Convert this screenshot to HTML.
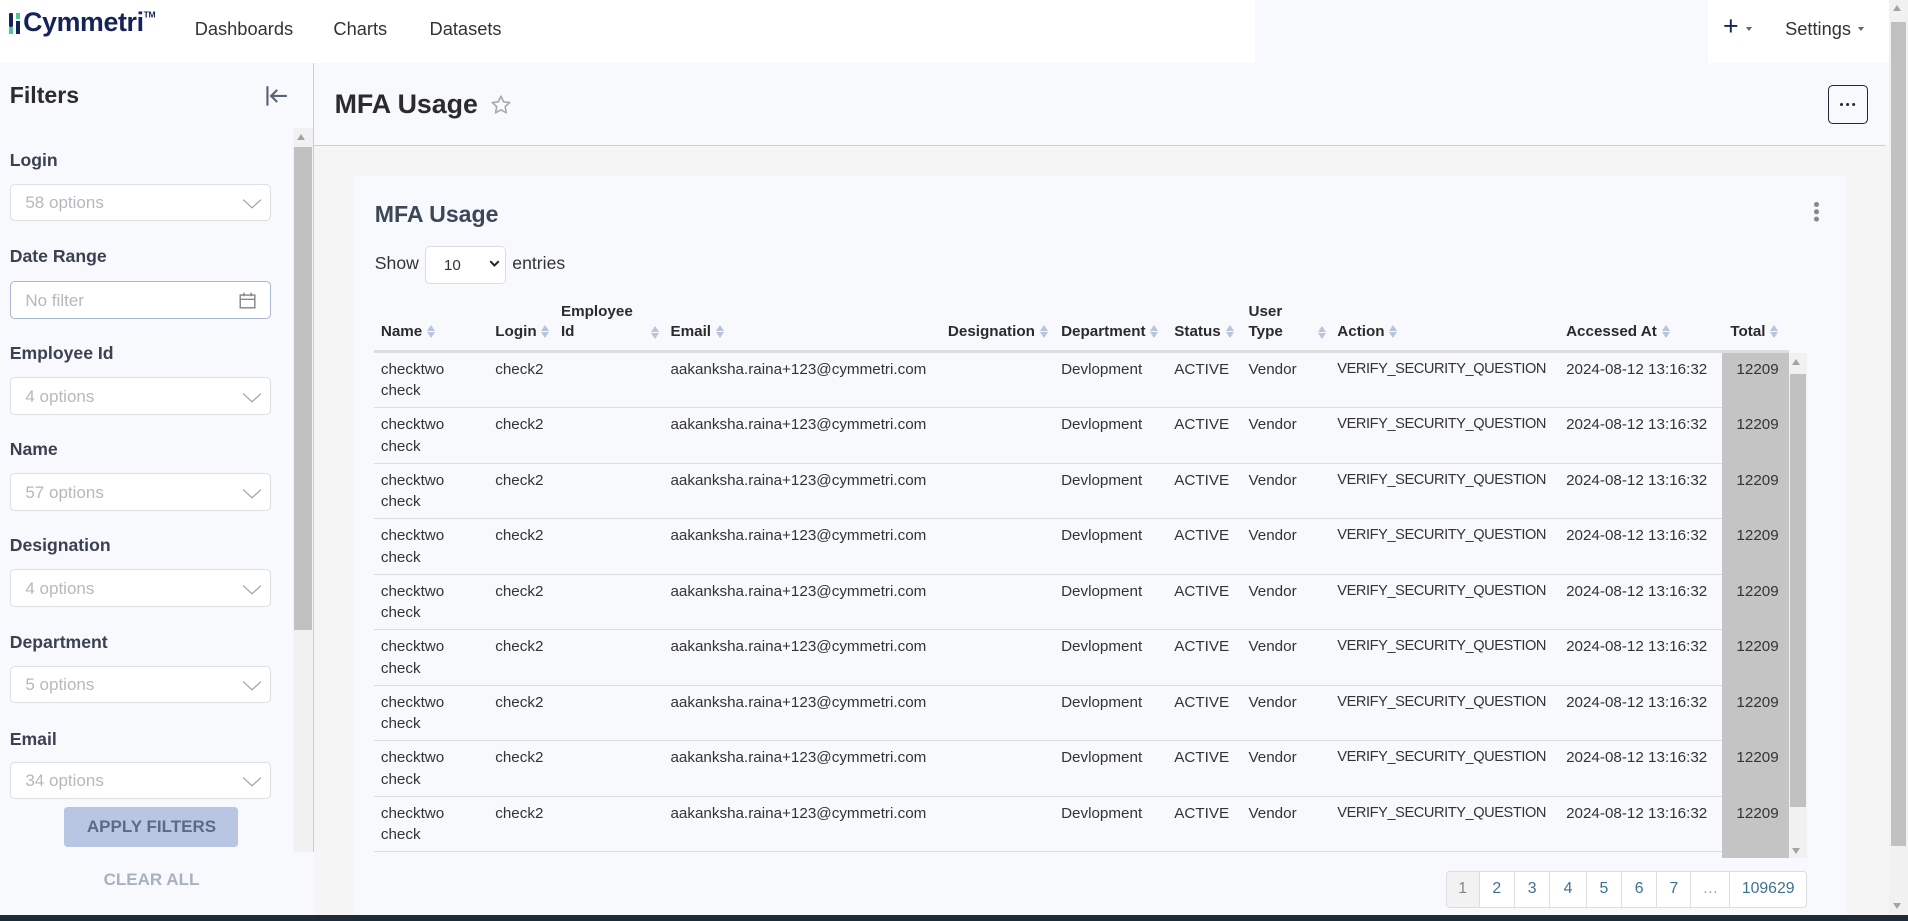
<!DOCTYPE html>
<html><head><meta charset="utf-8"><style>
html{zoom:1.21684}
*{box-sizing:border-box;margin:0;padding:0}
body{width:1568px;height:757px;overflow:hidden;position:relative;background:#f7f9fc;font-family:"Liberation Sans",sans-serif;color:#333}
.a{position:absolute}
.nav a{position:absolute;top:15px;font-size:15px;color:#333}
.lbl{position:absolute;left:8px;font-size:14.5px;font-weight:bold;color:#3a4150}
.sel{position:absolute;left:8px;width:215px;height:31px;background:#fff;border:1px solid #dcdfe4;border-radius:4px;font-size:14px;color:#b5b8be;padding:7px 12px}
.sel .chev{position:absolute;right:10px;top:8px;width:10px;height:10px;border-right:1.3px solid #999;border-bottom:1.3px solid #999;transform:scaleX(1.1) rotate(45deg);}
.th{position:absolute;font-size:12.5px;font-weight:bold;color:#2b2b2b;line-height:17px}
.s{display:inline-block;width:7px;height:12px;vertical-align:middle;margin-left:4px;position:relative}
.s:before{content:"";position:absolute;left:0;top:0;border:3.5px solid transparent;border-bottom:5px solid #b8c4dc;border-top:0}
.s:after{content:"";position:absolute;left:0;top:6px;border:3.5px solid transparent;border-top:5px solid #b8c4dc;border-bottom:0}
.row{position:absolute;left:307px;width:1108px;height:45.6px;border-bottom:1px solid #ddd;font-size:12.5px;color:#333;line-height:17.5px}
.row span{position:absolute;top:5px}
.row span.ac{font-size:12px;letter-spacing:-0.35px}
.pg{position:absolute;top:716px;height:30px;border:1px solid #ddd;border-left:none;font-size:13px;color:#3d7190;text-align:center;line-height:28px;background:#fff}
</style></head><body>
<!-- nav -->
<div class="a" style="left:0;top:0;width:1031px;height:52px;background:#fff"></div>
<div class="a" style="left:1404px;top:0;width:148px;height:52px;background:#fff"></div>
<div class="a" style="left:7px;top:11px;width:4px;height:11px;background:#14245a;border-radius:1px"></div>
<div class="a" style="left:7px;top:22px;width:4px;height:6px;background:#4cc9a0"></div>
<div class="a" style="left:13px;top:11px;width:3.5px;height:5px;background:#4cc9a0"></div>
<div class="a" style="left:13px;top:17px;width:3.5px;height:11px;background:#14245a"></div>
<div class="a" style="left:19px;top:6px;font-size:22px;font-weight:bold;color:#14245a;letter-spacing:-0.3px">Cymmetri<sup style="font-size:7px;vertical-align:11px">TM</sup></div>
<div class="nav"><a style="left:160px">Dashboards</a><a style="left:274px">Charts</a><a style="left:353px">Datasets</a></div>
<div class="a" style="left:1416px;top:9px;font-size:22px;color:#14245a">+</div>
<div class="a" style="left:1435px;top:22px;border:3px solid transparent;border-top:4px solid #666"></div>
<div class="a" style="left:1467px;top:15px;font-size:15px;color:#333">Settings</div>
<div class="a" style="left:1527px;top:22px;border:3px solid transparent;border-top:4px solid #666"></div>
<!-- page scrollbar -->
<div class="a" style="left:1552px;top:0;width:16px;height:752px;background:#f1f1f1"></div>
<div class="a" style="left:1554px;top:18px;width:12px;height:677px;background:#c1c1c1"></div>
<div class="a" style="left:1556px;top:4px;border:4px solid transparent;border-bottom:5px solid #a3a3a3;border-top:0"></div>
<div class="a" style="left:1556px;top:742px;border:4px solid transparent;border-top:5px solid #a3a3a3;border-bottom:0"></div>
<div class="a" style="left:0;top:752px;width:1568px;height:5px;background:#1e2b36"></div>
<!-- sidebar -->
<div class="a" style="left:257px;top:52px;width:1px;height:648px;background:#c6cfe0"></div>
<div class="a" style="left:8px;top:67px;font-size:19px;font-weight:bold;color:#2b2b2b">Filters</div>
<svg class="a" style="left:218px;top:70px" width="20" height="18" viewBox="0 0 20 18"><path d="M2 1v16M18 9H5M10 4L5 9l5 5" stroke="#5a6577" stroke-width="1.8" fill="none"/></svg>
<div class="a" style="left:241px;top:105px;width:16px;height:595px;background:#f1f1f1"></div>
<div class="a" style="left:242px;top:121px;width:14px;height:397px;background:#c1c1c1"></div>
<div class="a" style="left:244px;top:110px;border:4px solid transparent;border-bottom:5px solid #a3a3a3;border-top:0"></div>
<div class="lbl" style="top:123px">Login</div>
<div class="sel" style="top:151px">58 options<i class="chev"></i></div>
<div class="lbl" style="top:202px">Date Range</div>
<div class="sel" style="top:231px;border-color:#a9b6d6">No filter
<svg class="a" style="right:12px;top:8px" width="14" height="14" viewBox="0 0 14 14"><rect x="1" y="2.5" width="12" height="10.5" fill="none" stroke="#888" stroke-width="1.2"/><path d="M1 6h12M4 0.5v3M10 0.5v3" stroke="#888" stroke-width="1.2"/></svg></div>
<div class="lbl" style="top:282px">Employee Id</div>
<div class="sel" style="top:310px">4 options<i class="chev"></i></div>
<div class="lbl" style="top:361px">Name</div>
<div class="sel" style="top:389px">57 options<i class="chev"></i></div>
<div class="lbl" style="top:440px">Designation</div>
<div class="sel" style="top:468px">4 options<i class="chev"></i></div>
<div class="lbl" style="top:519px">Department</div>
<div class="sel" style="top:547px">5 options<i class="chev"></i></div>
<div class="lbl" style="top:599px">Email</div>
<div class="sel" style="top:626px">34 options<i class="chev"></i></div>
<div class="a" style="left:53px;top:663px;width:143px;height:33px;background:#b8c6e4;border-radius:3px;color:#5b6b84;font-size:14px;font-weight:bold;text-align:center;line-height:33px">APPLY FILTERS</div>
<div class="a" style="left:53px;top:715px;width:143px;text-align:center;color:#a8b1c2;font-size:14px;font-weight:bold">CLEAR ALL</div>
<!-- main header -->
<div class="a" style="left:275px;top:73px;font-size:22px;font-weight:bold;color:#2b2b2b">MFA Usage</div>
<svg class="a" style="left:403px;top:77px" width="18" height="18" viewBox="0 0 24 24"><path d="M12 2.5l2.9 6.1 6.6.8-4.9 4.6 1.3 6.6L12 17.3l-5.9 3.3 1.3-6.6-4.9-4.6 6.6-.8z" fill="none" stroke="#aaa" stroke-width="1.8" stroke-linejoin="round"/></svg>
<div class="a" style="left:1502px;top:70px;width:33px;height:32px;border:1.3px solid #1d2740;border-radius:4px"></div>
<div class="a" style="left:1512px;top:85px;width:2.5px;height:2.5px;border-radius:2px;background:#1d2740;box-shadow:5px 0 0 #1d2740,10px 0 0 #1d2740"></div>
<div class="a" style="left:258px;top:119px;width:1292px;height:1px;background:#c6cfe0"></div>
<div class="a" style="left:258px;top:120px;width:1294px;height:632px;background:#f5f5f6"></div>
<!-- card -->
<div class="a" style="left:291px;top:145px;width:1227px;height:607px;background:#f7f9fc"></div>
<div class="a" style="left:308px;top:165px;font-size:19px;font-weight:bold;color:#3c4859">MFA Usage</div>
<div class="a" style="left:1491px;top:166px;width:4px;height:4px;border-radius:2px;background:#888;box-shadow:0 6px 0 #888,0 12px 0 #888"></div>
<div class="a" style="left:308px;top:208px;font-size:14.5px">Show</div>
<div class="a" style="left:349px;top:202px;width:67px;height:31px;background:#fff;border:1px solid #ddd;border-radius:4px;font-size:12.5px;padding:8px 15px">10</div>
<svg class="a" style="left:402px;top:214px" width="9" height="6" viewBox="0 0 9 6"><path d="M1 1l3.5 3.5L8 1" stroke="#222" stroke-width="1.6" fill="none"/></svg>
<div class="a" style="left:421px;top:208px;font-size:14.5px">entries</div>
<!-- table header -->
<div class="th" style="left:313px;top:265px">Name<i class="s"></i></div>
<div class="th" style="left:407px;top:265px">Login<i class="s"></i></div>
<div class="th" style="left:461px;top:248px">Employee<br>Id</div><i class="s" style="position:absolute;left:531px;top:268px"></i>
<div class="th" style="left:551px;top:265px">Email<i class="s"></i></div>
<div class="th" style="left:779px;top:265px">Designation<i class="s"></i></div>
<div class="th" style="left:872px;top:265px">Department<i class="s"></i></div>
<div class="th" style="left:965px;top:265px">Status<i class="s"></i></div>
<div class="th" style="left:1026px;top:248px">User<br>Type</div><i class="s" style="position:absolute;left:1079px;top:268px"></i>
<div class="th" style="left:1099px;top:265px">Action<i class="s"></i></div>
<div class="th" style="left:1287px;top:265px">Accessed At<i class="s"></i></div>
<div class="th" style="left:1422px;top:265px">Total<i class="s"></i></div>
<div class="a" style="left:307px;top:288px;width:1108px;height:2px;background:#ddd"></div>
<div class="a" style="left:1415px;top:290px;width:55px;height:415px;background:#c4c4c4"></div>
<div class="a" style="left:1415px;top:288px;width:55px;height:2px;background:#ddd"></div>
<div class="a" style="left:1470px;top:290px;width:15px;height:415px;background:#f1f1f1"></div>
<div class="a" style="left:1471px;top:307px;width:13px;height:356px;background:#c1c1c1"></div>
<div class="a" style="left:1473px;top:295px;border:4px solid transparent;border-bottom:5px solid #a3a3a3;border-top:0"></div>
<div class="a" style="left:1473px;top:697px;border:4px solid transparent;border-top:5px solid #a3a3a3;border-bottom:0"></div>
<div class="row" style="top:290px"><span style="left:6px">checktwo<br>check</span><span style="left:100px">check2</span><span style="left:244px">aakanksha.raina+123@cymmetri.com</span><span style="left:565px">Devlopment</span><span style="left:658px">ACTIVE</span><span style="left:719px">Vendor</span><span class="ac" style="left:792px">VERIFY_SECURITY_QUESTION</span><span style="left:980px">2024-08-12 13:16:32</span><span style="left:1120px">12209</span></div>
<div class="row" style="top:335.6px"><span style="left:6px">checktwo<br>check</span><span style="left:100px">check2</span><span style="left:244px">aakanksha.raina+123@cymmetri.com</span><span style="left:565px">Devlopment</span><span style="left:658px">ACTIVE</span><span style="left:719px">Vendor</span><span class="ac" style="left:792px">VERIFY_SECURITY_QUESTION</span><span style="left:980px">2024-08-12 13:16:32</span><span style="left:1120px">12209</span></div>
<div class="row" style="top:381.2px"><span style="left:6px">checktwo<br>check</span><span style="left:100px">check2</span><span style="left:244px">aakanksha.raina+123@cymmetri.com</span><span style="left:565px">Devlopment</span><span style="left:658px">ACTIVE</span><span style="left:719px">Vendor</span><span class="ac" style="left:792px">VERIFY_SECURITY_QUESTION</span><span style="left:980px">2024-08-12 13:16:32</span><span style="left:1120px">12209</span></div>
<div class="row" style="top:426.8px"><span style="left:6px">checktwo<br>check</span><span style="left:100px">check2</span><span style="left:244px">aakanksha.raina+123@cymmetri.com</span><span style="left:565px">Devlopment</span><span style="left:658px">ACTIVE</span><span style="left:719px">Vendor</span><span class="ac" style="left:792px">VERIFY_SECURITY_QUESTION</span><span style="left:980px">2024-08-12 13:16:32</span><span style="left:1120px">12209</span></div>
<div class="row" style="top:472.4px"><span style="left:6px">checktwo<br>check</span><span style="left:100px">check2</span><span style="left:244px">aakanksha.raina+123@cymmetri.com</span><span style="left:565px">Devlopment</span><span style="left:658px">ACTIVE</span><span style="left:719px">Vendor</span><span class="ac" style="left:792px">VERIFY_SECURITY_QUESTION</span><span style="left:980px">2024-08-12 13:16:32</span><span style="left:1120px">12209</span></div>
<div class="row" style="top:518px"><span style="left:6px">checktwo<br>check</span><span style="left:100px">check2</span><span style="left:244px">aakanksha.raina+123@cymmetri.com</span><span style="left:565px">Devlopment</span><span style="left:658px">ACTIVE</span><span style="left:719px">Vendor</span><span class="ac" style="left:792px">VERIFY_SECURITY_QUESTION</span><span style="left:980px">2024-08-12 13:16:32</span><span style="left:1120px">12209</span></div>
<div class="row" style="top:563.6px"><span style="left:6px">checktwo<br>check</span><span style="left:100px">check2</span><span style="left:244px">aakanksha.raina+123@cymmetri.com</span><span style="left:565px">Devlopment</span><span style="left:658px">ACTIVE</span><span style="left:719px">Vendor</span><span class="ac" style="left:792px">VERIFY_SECURITY_QUESTION</span><span style="left:980px">2024-08-12 13:16:32</span><span style="left:1120px">12209</span></div>
<div class="row" style="top:609.2px"><span style="left:6px">checktwo<br>check</span><span style="left:100px">check2</span><span style="left:244px">aakanksha.raina+123@cymmetri.com</span><span style="left:565px">Devlopment</span><span style="left:658px">ACTIVE</span><span style="left:719px">Vendor</span><span class="ac" style="left:792px">VERIFY_SECURITY_QUESTION</span><span style="left:980px">2024-08-12 13:16:32</span><span style="left:1120px">12209</span></div>
<div class="row" style="top:654.8px"><span style="left:6px">checktwo<br>check</span><span style="left:100px">check2</span><span style="left:244px">aakanksha.raina+123@cymmetri.com</span><span style="left:565px">Devlopment</span><span style="left:658px">ACTIVE</span><span style="left:719px">Vendor</span><span class="ac" style="left:792px">VERIFY_SECURITY_QUESTION</span><span style="left:980px">2024-08-12 13:16:32</span><span style="left:1120px">12209</span></div>
<!-- pagination -->
<div class="pg" style="left:1188px;width:28px;border-left:1px solid #ddd;background:#f2f2f2;color:#888;border-radius:3px 0 0 3px">1</div>
<div class="pg" style="left:1216px;width:29px">2</div>
<div class="pg" style="left:1245px;width:29px">3</div>
<div class="pg" style="left:1274px;width:30px">4</div>
<div class="pg" style="left:1304px;width:29px">5</div>
<div class="pg" style="left:1333px;width:29px">6</div>
<div class="pg" style="left:1362px;width:28px">7</div>
<div class="pg" style="left:1390px;width:32px;color:#999">…</div>
<div class="pg" style="left:1422px;width:63px;border-radius:0 3px 3px 0">109629</div>
</body></html>
